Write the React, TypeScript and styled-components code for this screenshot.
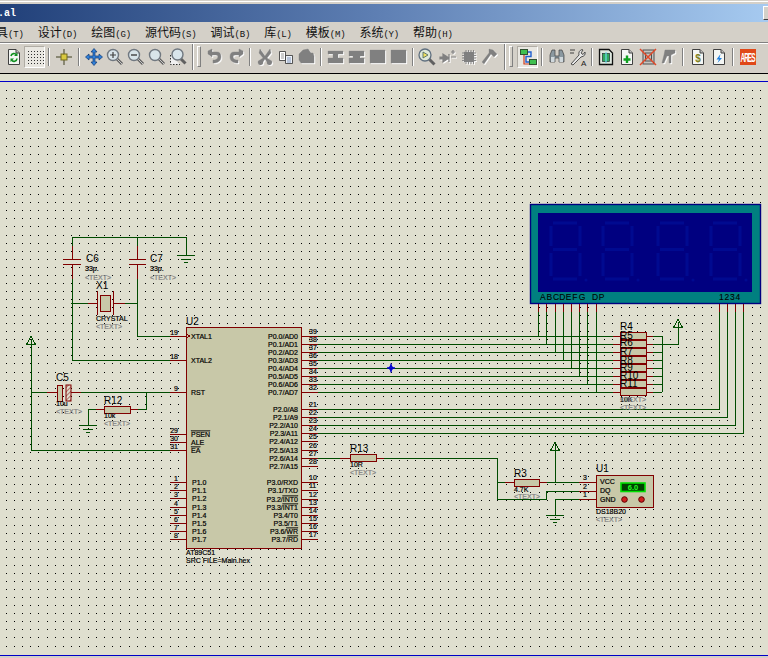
import { ReactNode } from "react";
import styled, { createGlobalStyle } from "styled-components";

const GlobalStyle = createGlobalStyle`
  html, body { margin: 0; padding: 0; background: #d4d0c8; }
`;

const Window = styled.div`
  width: 768px;
  height: 658px;
  overflow: hidden;
  display: flex;
  flex-direction: column;
  background: #d4d0c8;
  font-family: "Liberation Sans", sans-serif;
`;

const TopEdge = styled.div`
  height: 4px;
  box-sizing: border-box;
  border-top: 1px solid #d4d0c8;
  border-bottom: 2px solid #d4d0c8;
  background: #fff;
`;

const TitleBar = styled.div`
  height: 18px;
  display: flex;
  align-items: center;
  justify-content: space-between;
  background: linear-gradient(90deg, #214079 0%, #5f80b4 50%, #a6caf0 100%);
`;

const TitleText = styled.span`
  margin-left: -2px;
  color: #fff;
  font: bold 10px "Liberation Mono", monospace;
`;

const WinButton = styled.span`
  width: 4px;
  height: 12px;
  background: #d4d0c8;
  border-top: 1px solid #fff;
  border-left: 1px solid #fff;
  border-bottom: 1px solid #404040;
`;

const MenuBar = styled.div`
  height: 20px;
  box-sizing: border-box;
  padding-bottom: 2px;
  display: flex;
  align-items: center;
  gap: 14px;
  margin-left: -4px;
  font: 12px "Noto Sans CJK SC", sans-serif;
  color: #111;
`;

const Mnemonic = styled.span`
  font: 9px "Liberation Mono", monospace;
  letter-spacing: -0.2px;
`;

const ToolBar = styled.div`
  height: 32px;
  box-sizing: border-box;
  border-top: 1px solid #808080;
  border-bottom: 1px solid #000;
  box-shadow: inset 0 1px 0 #fff;
  padding: 3px 0 0 3px;
  display: flex;
  align-items: flex-start;
`;

const Slot = styled.div<{ $pressed?: boolean }>`
  width: 21px;
  height: 22px;
  flex: none;
  box-sizing: border-box;
  display: flex;
  align-items: center;
  justify-content: center;
  ${(p) =>
    p.$pressed &&
    `
    background: #e9e7e1;
    border: 1px solid;
    border-color: #b0aca4 #fff #fff #b0aca4;
  `}
`;

const Sep = styled.div<{ $w: number }>`
  width: ${(p) => p.$w}px;
  height: 22px;
  flex: none;
  display: flex;
  justify-content: center;
  align-items: center;
  &::after {
    content: "";
    width: 1px;
    height: 18px;
    background: #808080;
    border-right: 1px solid #fff;
  }
`;

const Grip = styled.div<{ $w: number }>`
  width: ${(p) => p.$w}px;
  height: 26px;
  margin-top: -2px;
  flex: none;
  display: flex;
  justify-content: center;
  gap: 3px;
  &::before {
    content: "";
    width: 1px;
    background: #808080;
    border-right: 1px solid #fff;
  }
  &::after {
    content: "";
    width: 2px;
    margin: 2px 0 3px;
    background: #d4d0c8;
    border: 1px solid;
    border-color: #fff #808080 #808080 #fff;
  }
`;

const Ico = styled.svg`
  width: 18px;
  height: 18px;
  display: block;
`;

const RulerGap = styled.div`
  height: 8px;
  box-sizing: border-box;
  background: #dfdfcf;
  border-bottom: 1px solid #0000c8;
`;

const Canvas = styled.div`
  height: 574px;
  box-sizing: border-box;
  background: #dfdfcf;
  border-bottom: 1px solid #0000c8;
  svg {
    display: block;
  }
`;

const Label = styled.text`
  font-family: "Liberation Sans", sans-serif;
  font-size: 7px;
  fill: #000;
  stroke: #000;
  stroke-width: 0.2;
`;
const PartName = styled(Label)`
  font-size: 10px;
  stroke-width: 0;
`;
const Hint = styled(Label)`
  fill: #808080;
  stroke: #808080;
`;
const SegLabel = styled(Label)`
  font-size: 8.5px;
  stroke-width: 0.1;
`;
const Bar = styled.tspan`
  text-decoration: overline;
`;

const Wire = styled.path`
  fill: none;
  stroke: #004c00;
  stroke-width: 1;
  shape-rendering: crispEdges;
`;
const Lead = styled.path`
  fill: none;
  stroke: #800000;
  stroke-width: 1;
  shape-rendering: crispEdges;
`;
const Body = styled.rect`
  fill: #c8c8a8;
  stroke: #800000;
  stroke-width: 1;
  shape-rendering: crispEdges;
`;

const MENU: [string, string][] = [
  ["具", "(T)"],
  ["设计", "(D)"],
  ["绘图", "(G)"],
  ["源代码", "(S)"],
  ["调试", "(B)"],
  ["库", "(L)"],
  ["模板", "(M)"],
  ["系统", "(Y)"],
  ["帮助", "(H)"],
];

const Dim = ({ children }: { children: ReactNode }) => (
  <Ico viewBox="0 0 18 18">
    <g transform="translate(1 1)" fill="#fff" stroke="#fff">
      {children}
    </g>
    <g fill="#808080" stroke="#808080">
      {children}
    </g>
  </Ico>
);

const Lens = ({ children }: { children?: ReactNode }) => (
  <Ico viewBox="0 0 18 18">
    <path d="M10.5 10.5L16 16" stroke="#606060" strokeWidth="3" />
    <path d="M10.5 10.5L16 16" stroke="#c8c8c8" strokeWidth="1" />
    <circle cx="7" cy="7" r="5.5" fill="#d8e4ea" stroke="#707880" strokeWidth="1.4" />
    {children}
  </Ico>
);

const Doc = ({ children }: { children?: ReactNode }) => (
  <Ico viewBox="0 0 18 18">
    <path d="M3.5 1.5H11L14.5 5V16.5H3.5Z" fill="#f4f6f4" stroke="#404040" />
    <path d="M11 1.5V5H14.5" fill="#c0c0c0" stroke="#404040" />
    {children}
  </Ico>
);

const GRID_DOTS: string[] = [];
for (let y = 3; y < 17; y += 3) for (let x = 2; x < 18; x += 3) GRID_DOTS.push(`M${x} ${y}h1v1h-1z`);

const Toolbar = () => (
  <ToolBar>
    <Slot>
      <Doc>
        <path d="M6 8A3 3 0 0 1 11.5 7M12 10.5A3 3 0 0 1 6.5 12" fill="none" stroke="#109020" strokeWidth="1.6" />
        <path d="M12.5 4.5V8H9ZM5.5 14V10.5H9Z" fill="#109020" />
      </Doc>
    </Slot>
    <Slot $pressed>
      <Ico viewBox="0 0 18 18">
        <path d={GRID_DOTS.join("")} fill="#303030" />
      </Ico>
    </Slot>
    <Sep $w={8} />
    <Slot>
      <Ico viewBox="0 0 18 18">
        <path d="M1 9H17M9 1V17" stroke="#404020" />
        <rect x="6" y="6" width="6" height="6" fill="#d8c840" stroke="#706820" />
      </Ico>
    </Slot>
    <Sep $w={9} />
    <Slot>
      <Ico viewBox="0 0 18 18">
        <path
          d="M9 .5L12 4H10V8H14V6L17.5 9L14 12V10H10V14H12L9 17.5L6 14H8V10H4V12L.5 9L4 6V8H8V4H6Z"
          fill="#2f7fd8"
          stroke="#103870"
          strokeWidth=".7"
        />
      </Ico>
    </Slot>
    <Slot>
      <Lens>
        <path d="M4 7H10M7 4V10" stroke="#404040" strokeWidth="1.2" />
      </Lens>
    </Slot>
    <Slot>
      <Lens>
        <path d="M4 7H10" stroke="#404040" strokeWidth="1.4" />
      </Lens>
    </Slot>
    <Slot>
      <Lens />
    </Slot>
    <Slot>
      <Ico viewBox="0 0 18 18">
        <path d="M1.5 7V16.5H11" fill="#f0f0f0" stroke="#303030" strokeDasharray="1.5 1.5" />
        <path d="M11.5 10.5L16.5 15.5" stroke="#606060" strokeWidth="3" />
        <circle cx="8.5" cy="6.5" r="5.5" fill="#d8e4ea" stroke="#707880" strokeWidth="1.4" />
      </Ico>
    </Slot>
    <Grip $w={16} />
    <Slot>
      <Dim>
        <path d="M2 3L6 1V9L2 6ZM6 4H11Q15 4 15 9Q15 14 9 15L7 15V12L9 12Q12 11 12 9Q12 7 10 7H6Z" strokeWidth=".4" />
      </Dim>
    </Slot>
    <Slot>
      <Dim>
        <path d="M16 3L12 1V9L16 6ZM12 4H7Q3 4 3 9Q3 14 9 15L11 15V12L9 12Q6 11 6 9Q6 7 8 7H12Z" strokeWidth=".4" />
      </Dim>
    </Slot>
    <Sep $w={8} />
    <Slot>
      <Dim>
        <path d="M4 1L9 8L14 1L15 5L11 10L14 12A2.5 2.5 0 1 1 11 14L9 11L7 14A2.5 2.5 0 1 1 4 12L7 10L3 5Z" strokeWidth=".3" />
      </Dim>
    </Slot>
    <Slot>
      <Ico viewBox="0 0 18 18">
        <path d="M2.5 3.5H8.5V12.5H2.5Z" fill="#fff" stroke="#303030" strokeWidth=".8" />
        <path d="M4 6H7M4 8H7M4 10H7" stroke="#707070" strokeWidth=".7" />
        <path d="M8.5 7.5H15.5V15.5H8.5Z" fill="#eef2f8" stroke="#303030" strokeWidth=".8" />
        <path d="M10 10H14M10 12H14M10 14H14" stroke="#5070a0" strokeWidth=".7" />
      </Ico>
    </Slot>
    <Slot>
      <Dim>
        <path d="M5 2L10 1L13 5H15L16 8V15H3L1 12V6Z" strokeWidth=".4" />
      </Dim>
    </Slot>
    <Sep $w={8} />
    <Slot>
      <Dim>
        <path d="M1 3H16V6H11V10H16V15H1V10H6V6H1Z" strokeWidth=".3" />
      </Dim>
    </Slot>
    <Slot>
      <Dim>
        <path d="M1 3H16V8H12V10H16V15H1V10H5V8H1Z" strokeWidth=".3" />
      </Dim>
    </Slot>
    <Slot>
      <Dim>
        <path d="M1 2H16V15H1Z" strokeWidth=".3" />
      </Dim>
    </Slot>
    <Slot>
      <Dim>
        <path d="M1 2H16V15H1Z" strokeWidth=".3" />
      </Dim>
    </Slot>
    <Sep $w={7} />
    <Slot>
      <Ico viewBox="0 0 18 18">
        <path d="M11 11L16.5 16.5" stroke="#606060" strokeWidth="3" />
        <circle cx="7" cy="7" r="6" fill="#dfe8d8" stroke="#607080" strokeWidth="1.3" />
        <path d="M5 4V10L10 7Z" fill="#f0e060" stroke="#406060" strokeWidth=".8" />
      </Ico>
    </Slot>
    <Slot>
      <Dim>
        <path d="M1 9H4V6L10 10L4 14V11H1ZM10 6V14M12 4H16M14 2V6M12 9H17" strokeWidth="1.2" />
      </Dim>
    </Slot>
    <Slot>
      <Dim>
        <path d="M4 4H14V14H4Z" strokeWidth=".3" />
        <path d="M2 5H16M2 7.5H16M2 10H16M2 12.5H16M6 2V16M8.5 2V16M11 2V16M13.5 2V16" strokeWidth=".9" fill="none" />
      </Dim>
    </Slot>
    <Slot>
      <Dim>
        <path d="M8 1L12 2L16 6L13 9L10 6L3 16L1 14L8 5Z" strokeWidth=".3" />
      </Dim>
    </Slot>
    <Grip $w={17} />
    <Slot $pressed>
      <Ico viewBox="0 0 18 18">
        <rect x="1.5" y="1.5" width="7" height="5" fill="#40c050" stroke="#305030" />
        <rect x="10.5" y="11.5" width="7" height="5" fill="#40c050" stroke="#305030" />
        <path d="M9 4H12V8.5H7V14H10" fill="none" stroke="#2060d0" strokeWidth="1.4" />
        <path d="M5 7V16H10" fill="none" stroke="#d04020" strokeWidth="1.2" />
      </Ico>
    </Slot>
    <Sep $w={8} />
    <Slot>
      <Ico viewBox="0 0 18 18">
        <path d="M2 7L4 2H7V8H11V2H14L16 7V14H11V10H7V14H2Z" fill="#8a98a0" stroke="#404040" strokeWidth=".7" />
        <rect x="3" y="9" width="3.5" height="5" fill="#d0d8dc" />
        <rect x="11.5" y="9" width="3.5" height="5" fill="#d0d8dc" />
      </Ico>
    </Slot>
    <Slot>
      <Ico viewBox="0 0 18 18">
        <path d="M1 2H6M1 5H5" stroke="#404040" />
        <path d="M2 16L10 7Q9 3 13 1.5L14 2L12 5L14 6.5L16 4Q17 8 12 9L4 17Z" fill="#e8e8e8" stroke="#404040" strokeWidth=".9" />
        <text x="12" y="17.5" fontFamily="Liberation Sans" fontSize="8" fill="#202020">
          A
        </text>
      </Ico>
    </Slot>
    <Sep $w={7} />
    <Slot>
      <Ico viewBox="0 0 18 18">
        <path d="M2.5 1.5H12L15.5 5V16.5H2.5Z" fill="#dfe8e0" stroke="#101010" strokeWidth="1.3" />
        <rect x="5.5" y="5.5" width="7" height="8" fill="#30a860" stroke="#203030" strokeWidth=".7" />
        <path d="M9 4V15" stroke="#70e0f0" strokeWidth="1.2" />
      </Ico>
    </Slot>
    <Slot>
      <Doc>
        <path d="M9 7.5V15M5.5 11.5H12.5" stroke="#10a020" strokeWidth="2.4" />
      </Doc>
    </Slot>
    <Slot>
      <Ico viewBox="0 0 18 18">
        <rect x="4" y="2" width="11" height="14" fill="#c4c4c0" stroke="#505050" />
        <rect x="6.5" y="5" width="6" height="8" fill="none" stroke="#505050" />
        <path d="M1 1L17 17M17 1L1 17" stroke="#e04828" strokeWidth="1.5" />
      </Ico>
    </Slot>
    <Slot>
      <Dim>
        <path d="M5 2H15V5L11 7V15H9V8H7L4 15H2L4 7Z" strokeWidth=".4" />
      </Dim>
    </Slot>
    <Sep $w={8} />
    <Slot>
      <Doc>
        <text x="9" y="14" textAnchor="middle" fontFamily="Liberation Sans" fontWeight="700" fontSize="10" fill="#808020">
          $
        </text>
      </Doc>
    </Slot>
    <Slot>
      <Doc>
        <path d="M10.5 6L6.5 11.5H9L7.5 15L12 10H9.5Z" fill="#2080e0" />
      </Doc>
    </Slot>
    <Sep $w={8} />
    <Slot>
      <Ico viewBox="0 0 18 18">
        <rect x="1" y="1" width="16" height="16" fill="#e04818" />
        <text transform="translate(1.5 14) scale(1 2)" fontFamily="Liberation Sans" fontWeight="700" fontSize="6.5" fill="#fff" textLength="15">
          ARES
        </text>
      </Ico>
    </Slot>
  </ToolBar>
);

const dotPath = () => {
  let d = "";
  for (let r = 0; r < 70; r++) {
    const y = Math.floor(91 + r * 8.058);
    if (y > 652) break;
    for (let c = 0; c < 94; c++) {
      const x = Math.floor(6 + c * 8.2);
      d += `M${x} ${y}h1v1h-1z`;
    }
  }
  return d;
};

const Ground = ({ x, y }: { x: number; y: number }) => (
  <Wire d={`M${x - 9} ${y}H${x + 9}M${x - 5} ${y + 4}H${x + 5}M${x - 2} ${y + 7}H${x + 2}`} />
);

const Power = ({ x, y }: { x: number; y: number }) => (
  <Wire d={`M${x} ${y}L${x + 4.5} ${y + 8.5}H${x - 4.5}ZM${x} ${y + 3}V${y + 8}`} />
);

const Res = ({ x, y, w = 26 }: { x: number; y: number; w?: number }) => (
  <Body x={x} y={y - 3.5} width={w} height={7} />
);

const ROWS = [337, 345, 353, 361, 369, 377, 385, 393];
const SEG_X = [538.3, 546.3, 555.3, 563.3, 571.3, 579.3, 587.3, 596.3];
const DIGIT_X = [719.3, 727.3, 735.3, 743.3];
const DIGIT_Y = [410, 418, 426, 434];

const P0 = ["P0.0/AD0", "P0.1/AD1", "P0.2/AD2", "P0.3/AD3", "P0.4/AD4", "P0.5/AD5", "P0.6/AD6", "P0.7/AD7"];
const P2 = ["P2.0/A8", "P2.1/A9", "P2.2/A10", "P2.3/A11", "P2.4/A12", "P2.5/A13", "P2.6/A14", "P2.7/A15"];
const P2_Y = [410, 418, 426, 434, 442, 451, 459, 467];
const P3_Y = [483, 491, 500, 508, 516, 524, 532, 540];
const P1_Y = [483, 491.5, 499.5, 508, 516, 524, 532, 540];

const SegDigit = ({ x }: { x: number }) => (
  <g transform={`translate(${x} 222)`} fill="none" stroke="#000a90" strokeWidth="3">
    <path d="M5 2H29M3 5V25M32 5V25M5 28.5H29M3 32V55M32 32V55M5 58H29" />
    <circle cx="38" cy="59" r="1.5" fill="#000a90" stroke="none" />
  </g>
);

const Schematic = () => (
  <svg width="768" height="573" viewBox="0 83 768 573">
    <defs>
      <pattern id="hatch" width="3" height="3" patternUnits="userSpaceOnUse" patternTransform="rotate(45)">
        <path d="M0 0V3" stroke="#800000" strokeWidth="1" />
      </pattern>
    </defs>
    <path d={dotPath()} fill="#000" shapeRendering="crispEdges" />

    {/* wires */}
    <Wire d="M72 280V361H170M72 247V238H186V256M137 238V247M137 280V337H170M71 304H88M125 304H138" />
    <Wire d="M31 345V451H170M31 393H47M81 393H170M138 410H146V393M96 410H88V426" />
    {ROWS.map((y) => (
      <Wire key={y} d={`M318 ${y}H613M653 ${y}H662`} />
    ))}
    {SEG_X.map((x, i) => (
      <Wire key={x} d={`M${x} 313V${ROWS[i]}`} />
    ))}
    {DIGIT_X.map((x, i) => (
      <Wire key={x} d={`M${x} 313V${DIGIT_Y[i]}H318`} />
    ))}
    <Wire d="M662 337V393M662 345H678V329" />
    <Wire d="M318 459H340M384 459H497V500H546V492H579M497 483H505M547 483H579M555 483V452M579 500H555V516" />
    <Ground x={186} y={256} />
    <Ground x={88} y={426} />
    <Ground x={555} y={516} />
    <Power x={31} y={337} />
    <Power x={678} y={320} />
    <Power x={555} y={443} />
    <path d="M391 364.5V373.5M387 369H395" stroke="#0000d0" strokeWidth="1.4" />
    <path d="M391 366.5L393 369L391 371.5L389 369Z" fill="none" stroke="#0000d0" strokeWidth="1.2" />

    {/* caps, crystal */}
    <Lead d="M72 247V260M72 265V280M63 260H81M63 265H81M137 247V260M137 265V280M129 260H146M129 265H146" />
    <Lead d="M88 304H97M97 292V316M113 292V316M113 304H125" />
    <Body x={100} y={296} width={10} height={16} />
    <Lead d="M47 393H57M71 393H81M96 410H104M130 410H138" />
    <Body x={57} y={386} width={5} height={16} />
    <rect x={66} y={386} width={5} height={16} fill="url(#hatch)" stroke="#800000" strokeWidth="1" />
    <Res x={104} y={410.5} />
    <PartName x={86} y={263}>C6</PartName>
    <Label x={85} y={272}>33p.</Label>
    <Hint x={85} y={281}>&lt;TEXT&gt;</Hint>
    <PartName x={150} y={263}>C7</PartName>
    <Label x={150} y={272}>33p.</Label>
    <Hint x={150} y={281}>&lt;TEXT&gt;</Hint>
    <PartName x={96} y={290}>X1</PartName>
    <Label x={96} y={322}>CRYSTAL</Label>
    <Hint x={96} y={330}>&lt;TEXT&gt;</Hint>
    <PartName x={56} y={382}>C5</PartName>
    <Label x={56} y={407}>10u</Label>
    <Hint x={56} y={415}>&lt;TEXT&gt;</Hint>
    <PartName x={104} y={405}>R12</PartName>
    <Label x={104} y={419}>10k</Label>
    <Hint x={104} y={427}>&lt;TEXT&gt;</Hint>

    {/* U2 */}
    <Body x={186.5} y={328.5} width={115} height={220.5} strokeWidth="2" />
    <Lead d="M186.5 335L189.5 337L186.5 339" />
    {[337, 361, 393, 435, 443, 451, ...P1_Y].map((y) => (
      <Lead key={y} d={`M170 ${y}H186`} />
    ))}
    {[...ROWS, ...P2_Y, ...P3_Y].map((y) => (
      <Lead key={y} d={`M302 ${y}H318`} />
    ))}
    <PartName x={186} y={326}>U2</PartName>
    {(
      [
        ["19", "XTAL1", 337],
        ["18", "XTAL2", 361],
        ["9", "RST", 393],
        ["29", "PSEN", 435],
        ["30", "ALE", 443],
        ["31", "EA", 451],
      ] as [string, string, number][]
    ).map(([n, name, y]) => (
      <g key={n}>
        <Label x={178} y={y - 1.5} textAnchor="end">{n}</Label>
        <Label x={191} y={y + 2.5}>
          {name === "PSEN" || name === "EA" ? <Bar>{name}</Bar> : name}
        </Label>
      </g>
    ))}
    {P1_Y.map((y, i) => (
      <g key={y}>
        <Label x={178} y={y - 1.5} textAnchor="end">{i + 1}</Label>
        <Label x={192} y={y + 2.5}>P1.{i}</Label>
      </g>
    ))}
    {P0.map((t, i) => (
      <g key={t}>
        <Label x={298} y={ROWS[i] + 2.5} textAnchor="end">{t}</Label>
        <Label x={309} y={ROWS[i] - 2}>{39 - i}</Label>
      </g>
    ))}
    {P2.map((t, i) => (
      <g key={t}>
        <Label x={298} y={P2_Y[i] + 2.5} textAnchor="end">{t}</Label>
        <Label x={309} y={P2_Y[i] - 2}>{21 + i}</Label>
      </g>
    ))}
    {(
      [
        ["P3.0/", "RXD"],
        ["P3.1/", "TXD"],
        ["P3.2/", "INT0", true],
        ["P3.3/", "INT1", true],
        ["P3.4/", "T0"],
        ["P3.5/", "T1"],
        ["P3.6/", "WR", true],
        ["P3.7/", "RD", true],
      ] as [string, string, boolean?][]
    ).map(([a, b, bar], i) => (
      <g key={a}>
        <Label x={298} y={P3_Y[i] + 2.5} textAnchor="end">
          {a}
          {bar ? <Bar>{b}</Bar> : b}
        </Label>
        <Label x={309} y={P3_Y[i] - 2}>{10 + i}</Label>
      </g>
    ))}
    <Label x={186} y={556}>AT89C51</Label>
    <Label x={186} y={564}>SRC FILE=Main.hex</Label>

    {/* 7-seg display */}
    <rect x={530.5} y={205.5} width={230} height={99} fill="#008080" stroke="#000080" strokeWidth="1.4" />
    <rect x={538} y={214} width={214} height={79} fill="#000080" />
    {[548, 600, 655, 708].map((x) => (
      <SegDigit key={x} x={x} />
    ))}
    {[...SEG_X, ...DIGIT_X].map((x) => (
      <Lead key={x} d={`M${x} 305V313`} />
    ))}
    {"ABCDEFG".split("").map((c, i) => (
      <SegLabel key={c} x={540 + i * 6.45} y={301}>{c}</SegLabel>
    ))}
    <SegLabel x={592} y={301} letterSpacing="0.5">DP</SegLabel>
    <SegLabel x={719} y={301} letterSpacing="0.8">1234</SegLabel>

    {/* R4 pack */}
    {ROWS.map((y) => (
      <g key={y}>
        <Lead d={`M613 ${y}H620M646 ${y}H653`} />
        <Res x={620} y={y} />
      </g>
    ))}
    <PartName x={620} y={331}>R4</PartName>
    {(
      [
        ["R5", 340],
        ["R6", 347],
        ["R7", 356],
        ["R8", 365],
        ["R9", 372],
        ["R10", 380],
        ["R11", 388],
      ] as [string, number][]
    ).map(([t, y]) => (
      <PartName key={t} x={620} y={y}>{t}</PartName>
    ))}
    <Label x={620} y={403}>10K</Label>
    <Hint x={620} y={403}>&lt;TEXT&gt;</Hint>
    <Hint x={620} y={411}>&lt;TEXT&gt;</Hint>

    {/* R13, R3 */}
    <Lead d="M340 459H350M376 459H384M505 483H514M539 483H547" />
    <Res x={350} y={459} />
    <Res x={514} y={483.5} w={25} />
    <PartName x={350} y={453}>R13</PartName>
    <Label x={350} y={468}>10R</Label>
    <Hint x={350} y={476}>&lt;TEXT&gt;</Hint>
    <PartName x={514} y={478}>R3</PartName>
    <Label x={514} y={493}>4.7K</Label>
    <Hint x={514} y={500}>&lt;TEXT&gt;</Hint>

    {/* U1 */}
    <Lead d="M579 483H596M579 492H596M579 500.5H596" />
    <Body x={596} y={476} width={57} height={32.5} strokeWidth="2" />
    <rect x={621} y={484} width={24} height={8.5} fill="#004000" stroke="#00e000" strokeWidth="1.6" />
    <text x={633} y={491} textAnchor="middle" fontFamily="Liberation Sans" fontSize="7.5" fontWeight="700" fill="#20ff20">6.0</text>
    <circle cx={624.5} cy={500.5} r={2.8} fill="#d02020" stroke="#600000" />
    <circle cx={641.5} cy={500.5} r={2.8} fill="#d02020" stroke="#600000" />
    <PartName x={596} y={473}>U1</PartName>
    <Label x={583} y={481}>3</Label>
    <Label x={583} y={489.5}>2</Label>
    <Label x={583} y={498}>1</Label>
    <Label x={600} y={485}>VCC</Label>
    <Label x={600} y={494}>DQ</Label>
    <Label x={600} y={502.5}>GND</Label>
    <Label x={596} y={515}>DS18B20</Label>
    <Hint x={596} y={522.5}>&lt;TEXT&gt;</Hint>
  </svg>
);

export default function App() {
  return (
    <Window>
      <GlobalStyle />
      <TopEdge />
      <TitleBar>
        <TitleText>.al</TitleText>
        <WinButton />
      </TitleBar>
      <MenuBar>
        {MENU.map(([name, key]) => (
          <span key={key}>
            {name}
            <Mnemonic>{key}</Mnemonic>
          </span>
        ))}
      </MenuBar>
      <Toolbar />
      <RulerGap />
      <Canvas>
        <Schematic />
      </Canvas>
    </Window>
  );
}
